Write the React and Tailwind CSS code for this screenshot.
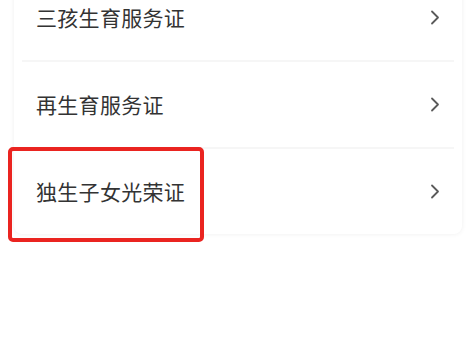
import React from "react";

const rows = ["三孩生育服务证", "再生育服务证", "独生子女光荣证"];

function Chevron() {
  return (
    <svg width="10" height="15" viewBox="0 0 10 15" fill="none">
      <path d="M2 1.5 L8 7.5 L2 13.5" stroke="#5a5a5a" strokeWidth="1.8" strokeLinecap="round" strokeLinejoin="round" />
    </svg>
  );
}

export default function App() {
  return (
    <div
      className="relative w-[472px] h-[360px] bg-white overflow-hidden"
      style={{ fontFamily: '"Noto Sans CJK SC", "Noto Sans", sans-serif' }}
    >
      <div className="ml-[14px] mr-[10px] mt-[-25px] bg-white rounded-lg shadow-[0_0_5px_rgba(0,0,0,0.07)]">
        {rows.map((name, i) => (
          <div key={i} className="mx-2">
            <div className="h-[85px] flex items-center justify-between pl-[14px] pr-[14px]">
              <p className="text-[21px] text-[#333333] tracking-[0.3px]">{name}</p>
              <Chevron />
            </div>
            {i < rows.length - 1 && <div className="h-[2px] bg-[#f6f6f6]" />}
          </div>
        ))}
      </div>
      {/* annotation box */}
      <div className="absolute left-[8px] top-[147px] w-[196px] h-[95px] border-4 border-[#ea2420] rounded-[5px]" />
    </div>
  );
}
